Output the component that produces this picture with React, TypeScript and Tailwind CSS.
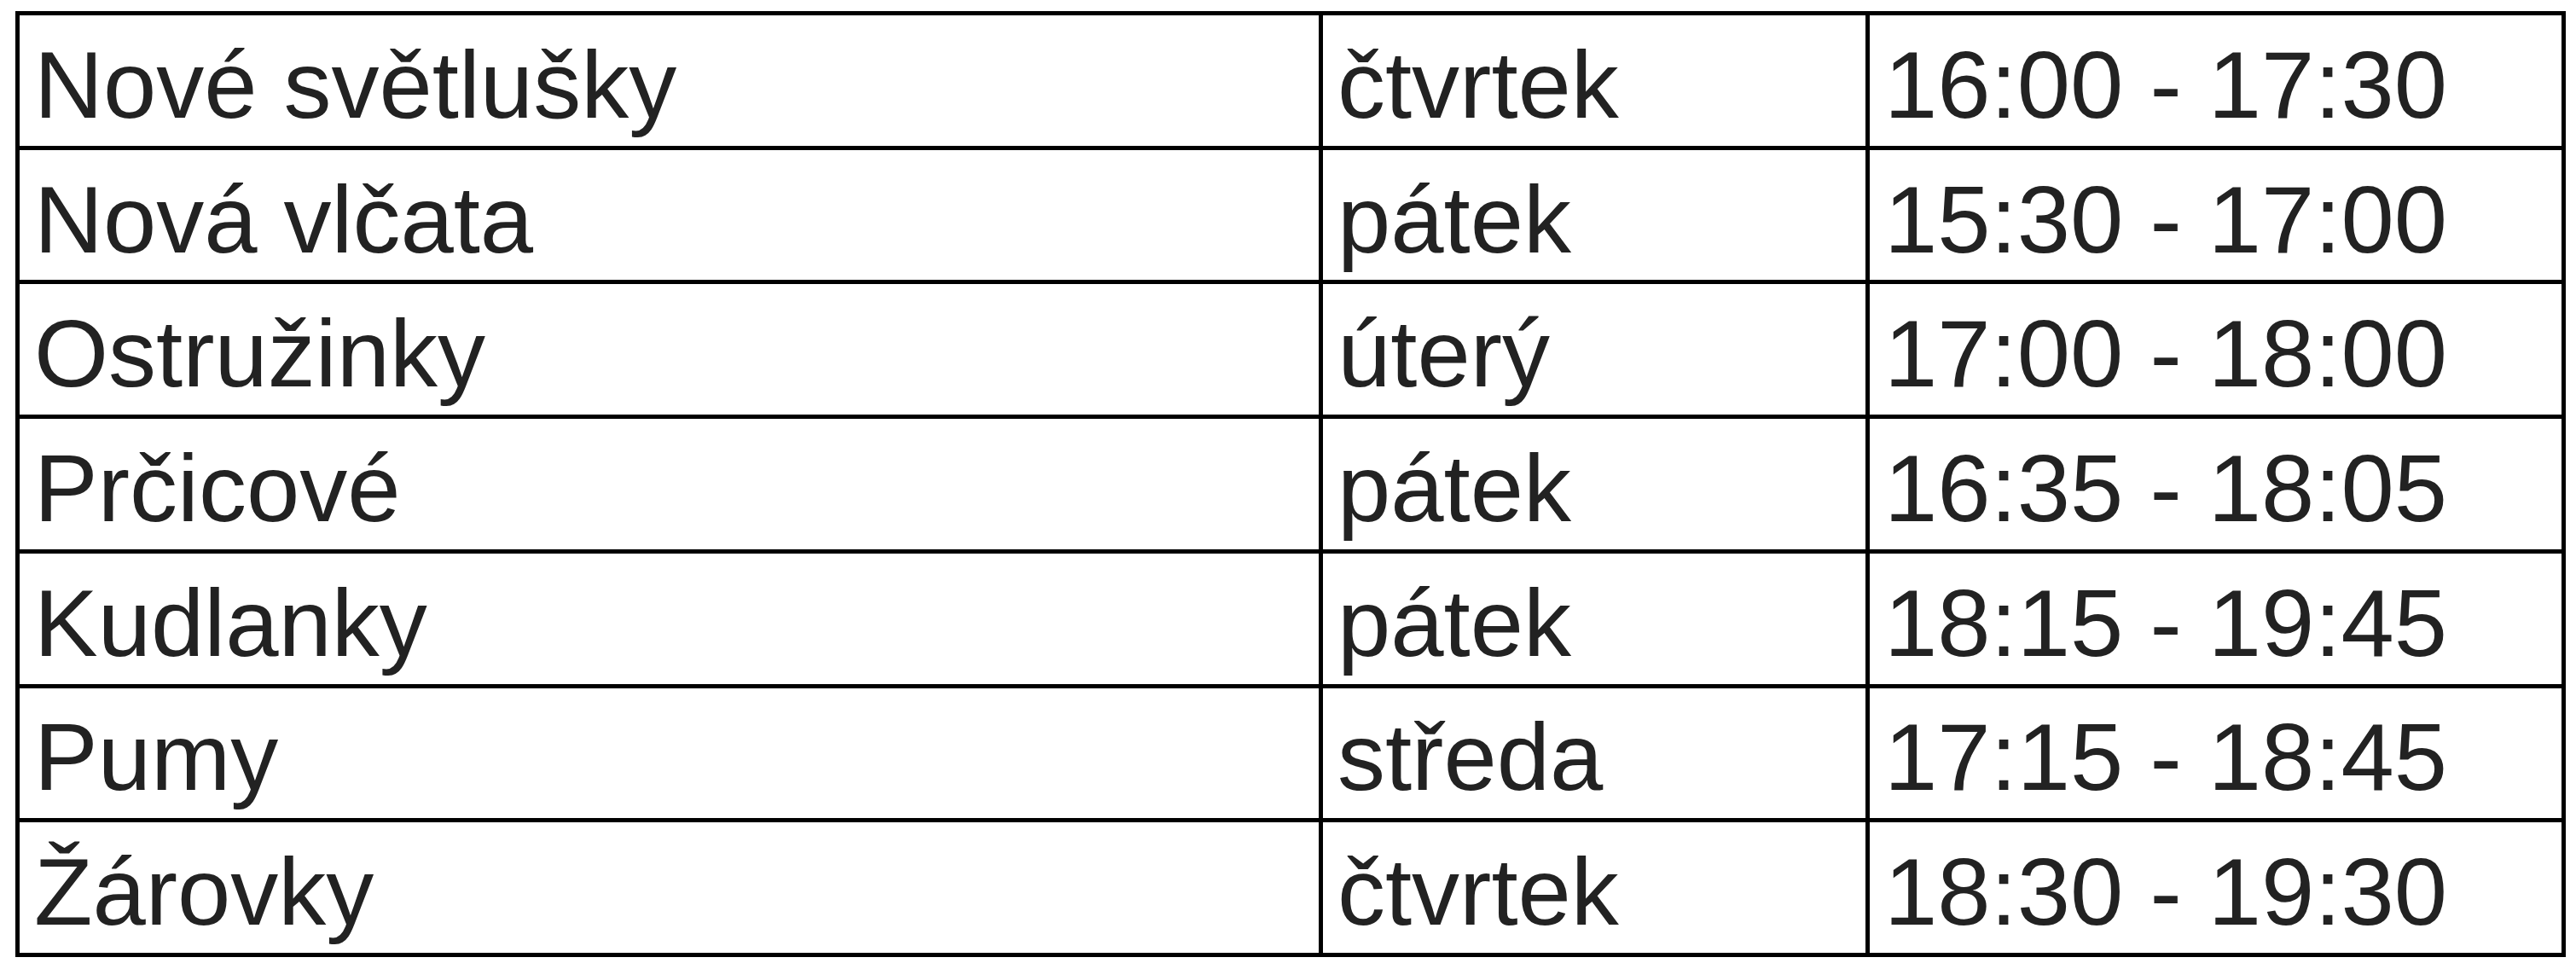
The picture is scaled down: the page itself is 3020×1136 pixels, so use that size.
const rows: [string, string, string][] = [
  ['Nové světlušky', 'čtvrtek', '16:00 - 17:30'],
  ['Nová vlčata', 'pátek', '15:30 - 17:00'],
  ['Ostružinky', 'úterý', '17:00 - 18:00'],
  ['Prčicové', 'pátek', '16:35 - 18:05'],
  ['Kudlanky', 'pátek', '18:15 - 19:45'],
  ['Pumy', 'středa', '17:15 - 18:45'],
  ['Žárovky', 'čtvrtek', '18:30 - 19:30'],
];

function Cell({ children }: { children: string }) {
  return (
    <div className="flex items-center bg-white pl-[17px] pt-[11px] text-[112px] leading-normal text-[#222222] whitespace-nowrap overflow-hidden">
      {children}
    </div>
  );
}

export default function App() {
  return (
    <div
      className="min-h-screen w-full bg-white pl-[18px] pt-[13px]"
      style={{ fontFamily: '"Liberation Sans", Arial, sans-serif' }}
    >
      <div className="grid h-[1109px] w-[2990px] grid-cols-[1523px_636px_811px] grid-rows-7 gap-[5px] bg-black p-[5px]">
        {rows.map(([group, day, time]) => (
          <div key={group} className="contents">
            <Cell>{group}</Cell>
            <Cell>{day}</Cell>
            <Cell>{time}</Cell>
          </div>
        ))}
      </div>
    </div>
  );
}
